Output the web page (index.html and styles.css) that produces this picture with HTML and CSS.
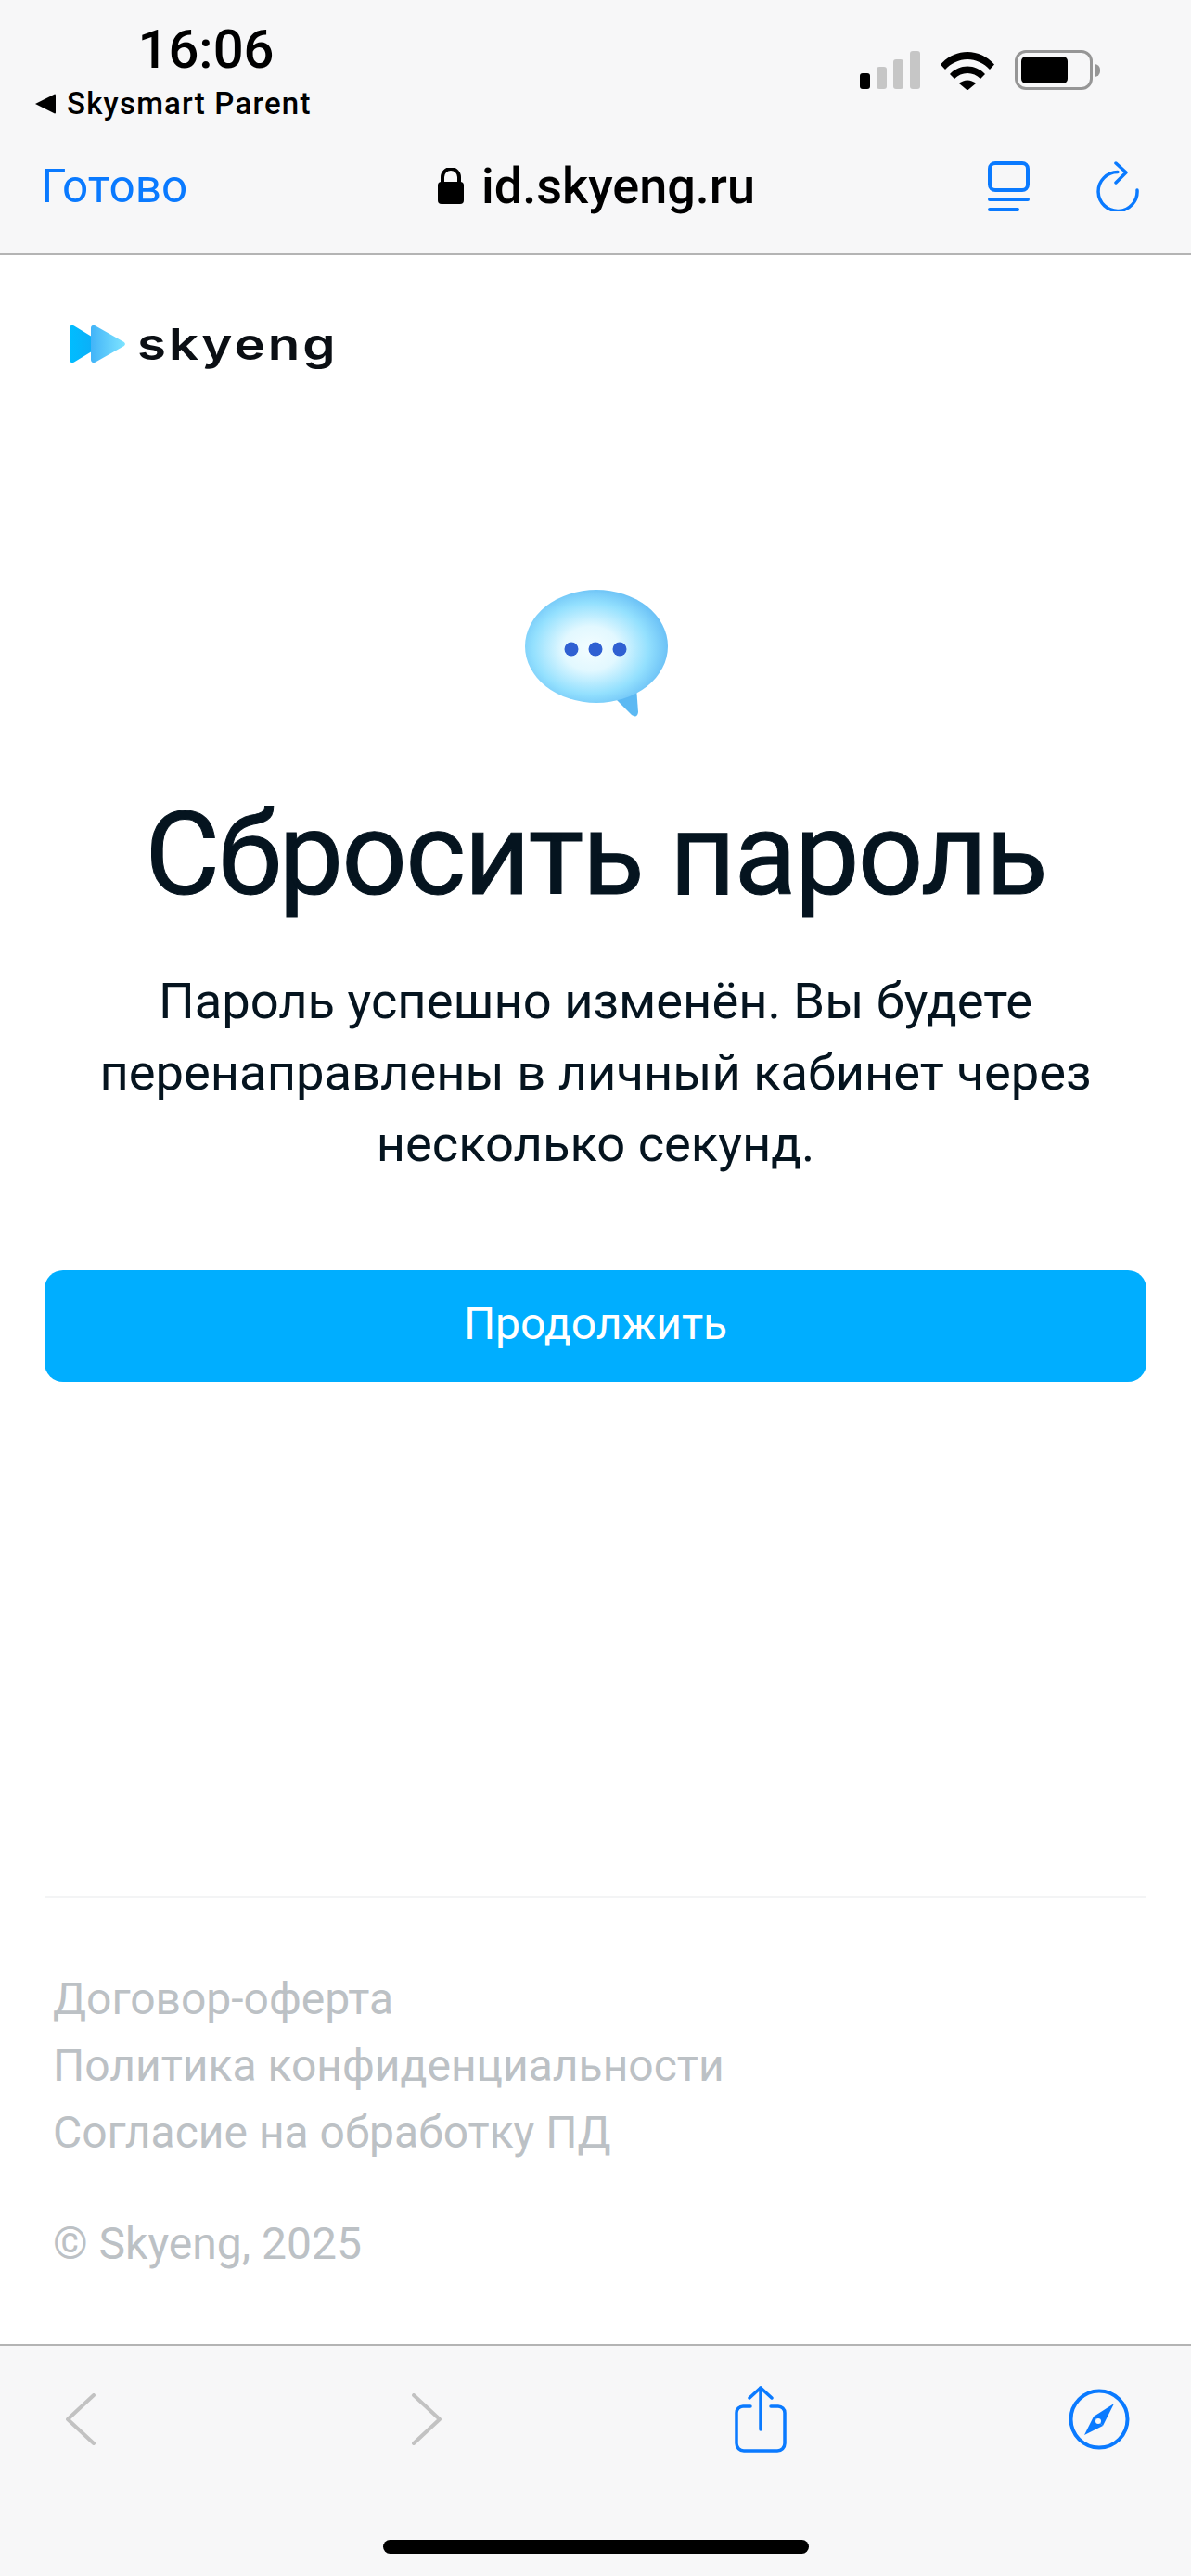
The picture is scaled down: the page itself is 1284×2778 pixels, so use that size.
FILE: index.html
```html
<!DOCTYPE html>
<html lang="en">
<head>
    <meta charset="UTF-8">
    <meta name="viewport" content="width=device-width, initial-scale=1.0">
    <title>Skyeng - Сбросить пароль</title>
    <link rel="stylesheet" href="styles.css">
</head>
<body>
    <div class="phone">
        <header class="top-bar">
            <div class="status">
                <div class="status-left">
                    <div class="time">16:06</div>
                    <div class="back-app">
                        <svg class="back-tri" width="22" height="22" viewBox="0 0 22 22"><path d="M0 11 21 0.5a1 1 0 0 1 1 1v19a1 1 0 0 1-1 1z" fill="#000"/></svg>
                        <span>Skysmart Parent</span>
                    </div>
                </div>
                <div class="status-right">
                    <div class="signal">
                        <span class="bar on h1"></span>
                        <span class="bar h2"></span>
                        <span class="bar h3"></span>
                        <span class="bar h4"></span>
                    </div>
                    <svg width="58" height="43" viewBox="0 0 58 43">
                        <path d="M0 15.5C7.5 7 18 2 29 2s21.500 5 29 13.500l-5 5.500C46.500 14 38 10 29 10S11.500 14 5 21z" fill="#000"/>
                        <path d="M10 26c5-5.500 12-8.500 19-8.500s14 3 19 8.500l-5 5c-3.800-3.800-8.800-6-14-6s-10.200 2.200-14 6z" fill="#000"/>
                        <path d="M20 36c2.500-2.300 5.700-3.500 9-3.500s6.500 1.200 9 3.500l-9 7.500z" fill="#000"/>
                    </svg>
                    <div class="battery">
                        <div class="battery-body"><div class="battery-fill"></div></div>
                        <div class="battery-cap"></div>
                    </div>
                </div>
            </div>
            <div class="nav">
                <a class="done">Готово</a>
                <div class="host">
                    <svg width="28" height="39" viewBox="0 0 28 39"><path d="M5 17V10a9 9 0 0 1 18 0v7" fill="none" stroke="#000" stroke-width="4"/><rect x="0" y="15" width="28" height="24" rx="4" fill="#000"/></svg>
                    <span>id.skyeng.ru</span>
                </div>
                <div class="nav-icons">
                    <svg width="45" height="54" viewBox="0 0 45 54" fill="none" stroke="#0a7aff" stroke-width="4" stroke-linecap="round">
                        <rect x="2" y="2" width="41" height="29" rx="6"/>
                        <path d="M2 41H43" />
                        <path d="M2 52H32" />
                    </svg>
                    <svg width="46" height="54" viewBox="0 0 46 54" fill="none" stroke="#0a7aff" stroke-width="3.500" stroke-linecap="round" stroke-linejoin="round">
                        <path d="M44 31A21 21 0 1 1 23 11.500"/>
                        <path d="M21 2 32 12 21 23"/>
                    </svg>
                </div>
            </div>
        </header>

        <main class="content">
            <div class="logo">
                <svg width="60" height="42" viewBox="0 0 60 42">
                    <defs>
                        <linearGradient id="logoBack" x1="0" x2="1" y1="0" y2="0">
                            <stop offset="0" stop-color="#00bdff"/>
                            <stop offset="1" stop-color="#12a8f5"/>
                        </linearGradient>
                        <linearGradient id="logoFront" x1="0" x2="1" y1="0" y2="0">
                            <stop offset="0" stop-color="#42b4f8"/>
                            <stop offset="1" stop-color="#7ee4ff"/>
                        </linearGradient>
                    </defs>
                    <path d="M0 4C0 1 3 0 5 1.500L37 21 5 40.500C3 42 0 41 0 38z" fill="url(#logoBack)"/>
                    <path d="M23 4C23 1 26 0 28 1.500L58 18.500C60.500 20 60.500 22 58 23.500L28 40.500C26 42 23 41 23 38z" fill="url(#logoFront)"/>
                </svg>
                <span class="logo-text">skyeng</span>
            </div>

            <svg class="bubble" width="156" height="140" viewBox="0 0 156 140">
                <defs>
                    <radialGradient id="bubbleFill" cx="0.46" cy="0.52" r="0.56">
                        <stop offset="0" stop-color="#f4fdff"/>
                        <stop offset="0.35" stop-color="#e2f8ff"/>
                        <stop offset="0.72" stop-color="#93e0fe"/>
                        <stop offset="1" stop-color="#66bdf5"/>
                    </radialGradient>
                </defs>
                <path d="M96 116 116 136Q122 140 123 133L121 106z" fill="#5cb9f3"/>
                <ellipse cx="78" cy="62" rx="77" ry="61" fill="url(#bubbleFill)"/>
                <circle cx="51" cy="65" r="7.500" fill="#2f60d2"/>
                <circle cx="77" cy="65" r="7.500" fill="#2f60d2"/>
                <circle cx="103" cy="65" r="7.500" fill="#2f60d2"/>
            </svg>

            <h1 class="title">Сбросить пароль</h1>
            <p class="message">Пароль успешно изменён. Вы будете перенаправлены в личный кабинет через несколько секунд.</p>
            <button class="continue-btn">Продолжить</button>

            <footer class="footer">
                <div class="footer-links">
                    <a>Договор-оферта</a>
                    <a>Политика конфиденциальности</a>
                    <a>Согласие на обработку ПД</a>
                </div>
                <div class="copyright">© Skyeng, 2025</div>
            </footer>
        </main>

        <nav class="bottom-bar">
            <div class="bottom-icons">
                <svg width="32" height="56" viewBox="0 0 32 56" fill="none" stroke="#c2c2c2" stroke-width="4" stroke-linecap="round" stroke-linejoin="round"><path d="M30 2 2 28 30 54"/></svg>
                <svg width="32" height="56" viewBox="0 0 32 56" fill="none" stroke="#c2c2c2" stroke-width="4" stroke-linecap="round" stroke-linejoin="round"><path d="M2 2 30 28 2 54"/></svg>
                <svg width="56" height="72" viewBox="0 0 56 72" fill="none" stroke="#0a7aff" stroke-width="3.500" stroke-linecap="round" stroke-linejoin="round">
                    <path d="M28 2V47"/>
                    <path d="M16 13 28 2 40 13"/>
                    <path d="M17 22H9a7 7 0 0 0-7 7v33a8 8 0 0 0 8 8h36a8 8 0 0 0 8-8V29a7 7 0 0 0-7-7h-8"/>
                </svg>
                <svg width="66" height="66" viewBox="0 0 66 66">
                    <circle cx="33" cy="33" r="30.500" fill="none" stroke="#0a7aff" stroke-width="4"/>
                    <path d="M49 16 37 40 27 30z" fill="#0a7aff"/>
                    <path d="M17 50 27 30 37 40z" fill="#0a7aff"/>
                    <circle cx="32" cy="35" r="3" fill="#f7f7f8"/>
                </svg>
            </div>
            <div class="home-indicator"></div>
        </nav>
    </div>
</body>
</html>
```

FILE: styles.css
```css
* {
    margin: 0;
    padding: 0;
    box-sizing: border-box;
}

body {
    font-family: 'Roboto', 'Liberation Sans', sans-serif;
    background: white;
}

.phone {
    width: 1284px;
    height: 2778px;
    display: flex;
    flex-direction: column;
    overflow: hidden;
}

/* top browser bar */
.top-bar {
    height: 275px;
    flex-shrink: 0;
    background: #f7f7f8;
    border-bottom: 2px solid #b4b4b4;
}

.status {
    height: 172px;
    display: flex;
    justify-content: space-between;
    padding: 24px 98px 0 38px;
}

.time {
    font-size: 58px;
    line-height: 58px;
    font-weight: 500;
    color: #000;
    text-align: center;
    width: 368px;
}

.back-app {
    display: flex;
    align-items: center;
    gap: 12px;
    margin-top: 10px;
    font-size: 33px;
    line-height: 40px;
    font-weight: 500;
    letter-spacing: 1.2px;
    color: #000;
}

.status-right {
    display: flex;
    align-items: flex-start;
    gap: 22px;
    padding-top: 30px;
}

.signal {
    display: flex;
    align-items: flex-end;
    gap: 7px;
    height: 42px;
}

.bar {
    width: 11px;
    background: #c6c6c6;
    border-radius: 3px;
}

.bar.on { background: #000; }
.bar.h1 { height: 17px; }
.bar.h2 { height: 24px; }
.bar.h3 { height: 32px; }
.bar.h4 { height: 41px; }

.battery {
    display: flex;
    align-items: center;
    gap: 2px;
}

.battery-body {
    width: 84px;
    height: 43px;
    border: 3px solid #969696;
    border-radius: 12px;
    padding: 4px;
}

.battery-fill {
    width: 50px;
    height: 100%;
    background: #000;
    border-radius: 5px;
}

.battery-cap {
    width: 6px;
    height: 14px;
    background: #969696;
    border-radius: 0 7px 7px 0;
}

.nav {
    display: grid;
    grid-template-columns: 1fr auto 1fr;
    align-items: center;
    padding: 0 56px 0 44px;
    height: 60px;
    margin-top: -3px;
}

.done {
    font-size: 49.5px;
    color: #0a7aff;
}

.host {
    display: flex;
    align-items: center;
    gap: 19px;
    font-size: 54px;
    font-weight: 500;
    color: #000;
    margin-left: 14px;
}

.nav-icons {
    justify-self: end;
    display: flex;
    gap: 72px;
}

/* page content */
.content {
    flex: 1;
    display: flex;
    flex-direction: column;
    align-items: center;
    padding: 0 48px;
}

.logo {
    align-self: flex-start;
    display: flex;
    align-items: center;
    gap: 13px;
    margin: 74px 0 0 27px;
    height: 44px;
}

.logo-text {
    display: inline-block;
    font-family: 'Inter', sans-serif;
    font-size: 47px;
    line-height: 40px;
    font-weight: 600;
    letter-spacing: 2.5px;
    color: #0b0f14;
    transform: scaleX(1.2);
    transform-origin: left center;
}

.bubble {
    margin-top: 242px;
    margin-left: 1px;
}

.title {
    margin-top: 72px;
    font-size: 124px;
    line-height: 150px;
    font-weight: 400;
    letter-spacing: -1.9px;
    color: #05141f;
    white-space: nowrap;
    -webkit-text-stroke: 1px #05141f;
}

.message {
    margin-top: 44px;
    width: 1120px;
    font-size: 54.3px;
    line-height: 77px;
    text-align: center;
    color: #05141f;
}

.continue-btn {
    margin-top: 98px;
    width: 100%;
    height: 120px;
    flex-shrink: 0;
    background: #00aeff;
    color: white;
    border: none;
    border-radius: 20px;
    padding-bottom: 6px;
    font-family: inherit;
    font-size: 48px;
}

.footer {
    margin-top: auto;
    width: 100%;
    border-top: 2px solid #f3f4f5;
    padding: 0 9px 72px;
    color: #bcc1c5;
    font-size: 48px;
    line-height: 72px;
}

.footer-links {
    display: flex;
    flex-direction: column;
    padding-top: 73px;
}

.copyright {
    margin-top: 48px;
}

/* bottom browser bar */
.bottom-bar {
    height: 250px;
    flex-shrink: 0;
    background: #f7f7f8;
    border-top: 2px solid #b4b4b4;
    display: flex;
    flex-direction: column;
    align-items: center;
}

.bottom-icons {
    width: 100%;
    height: 209px;
    display: grid;
    grid-template-columns: 373px 348px 360px auto;
    grid-template-rows: 72px;
    align-items: center;
    padding: 43px 0 0 71px;
}

.home-indicator {
    width: 459px;
    height: 15px;
    background: #000;
    border-radius: 8px;
}
```
